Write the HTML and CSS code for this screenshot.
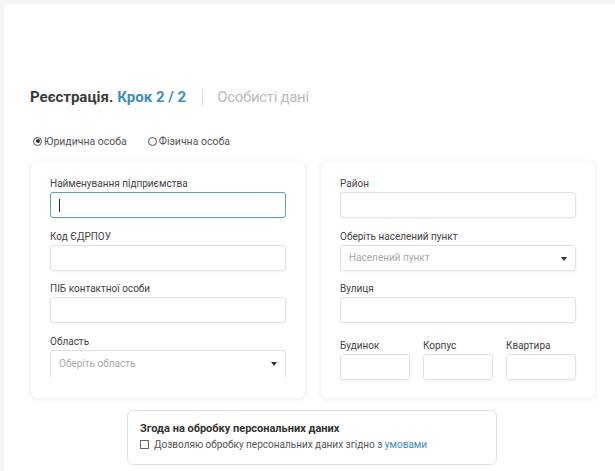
FILE: index.html
```html
<!DOCTYPE html>
<html lang="uk">
    <head>
        <meta charset="UTF-8" />
        <meta name="viewport" content="width=device-width, initial-scale=1.0" />
        <title>Реєстрація</title>
        <link rel="stylesheet" href="styles.css">
    </head>

    <body>
        <div class="page">
            <div class="top"></div>

            <h1 class="title"><span>Реєстрація.</span><span class="step">Крок 2 / 2</span><span class="sep"></span><span class="sub">Особисті дані</span></h1>

            <div class="types">
                <label class="radio"><span class="dot on"></span>Юридична особа</label>
                <label class="radio"><span class="dot"></span>Фізична особа</label>
            </div>

            <section class="cards">
                <div class="card">
                    <div class="field">
                        <label>Найменування підприємства</label>
                        <div class="input focus"><span class="caret"></span></div>
                    </div>
                    <div class="field">
                        <label>Код ЄДРПОУ</label>
                        <div class="input"></div>
                    </div>
                    <div class="field">
                        <label>ПІБ контактної особи</label>
                        <div class="input"></div>
                    </div>
                    <div class="field">
                        <label>Область</label>
                        <div class="input select cut">Оберіть область<span class="arrow"></span></div>
                    </div>
                </div>

                <div class="card">
                    <div class="field">
                        <label>Район</label>
                        <div class="input"></div>
                    </div>
                    <div class="field">
                        <label>Оберіть населений пункт</label>
                        <div class="input select">Населений пункт<span class="arrow"></span></div>
                    </div>
                    <div class="field">
                        <label>Вулиця</label>
                        <div class="input"></div>
                    </div>
                    <div class="row">
                        <div class="field">
                            <label>Будинок</label>
                            <div class="input"></div>
                        </div>
                        <div class="field">
                            <label>Корпус</label>
                            <div class="input"></div>
                        </div>
                        <div class="field">
                            <label>Квартира</label>
                            <div class="input"></div>
                        </div>
                    </div>
                </div>
            </section>

            <div class="consent">
                <h2>Згода на обробку персональних даних</h2>
                <label class="check"><span class="box"></span>Дозволяю обробку персональних даних згідно з&nbsp;<a href="#">умовами</a></label>
            </div>
        </div>
    </body>
</html>
```

FILE: styles.css
```css
* {
    margin: 0;
    padding: 0;
    box-sizing: border-box;
}

html {
    font-family: Roboto, "Open Sans", Arial, sans-serif;
}

body {
    background: #f4f5f9;
    color: #444;
    overflow: hidden;
}

.page {
    margin: 4px 0 0 4px;
    background: #fff;
    border-radius: 6px 0 0 0;
    height: 480px;
    padding-left: 26px;
}

.top {
    height: 80px;
}

.title {
    display: flex;
    align-items: center;
    font-size: 15px;
    font-weight: 700;
    color: #3b3b3b;
    height: 26px;
}

.step {
    color: #3e8ebf;
    margin-left: 4px;
}

.sep {
    width: 1px;
    height: 17px;
    background: #ddd;
    margin: 0 14px 0 16px;
}

.sub {
    font-weight: 400;
    color: #bbb;
    letter-spacing: -0.3px;
}

.types {
    display: flex;
    gap: 21px;
    height: 12px;
    margin: 25px 0 0 3px;
    font-size: 10.5px;
    color: #555;
}

.radio {
    display: flex;
    align-items: center;
}

.dot {
    width: 9px;
    height: 9px;
    border: 1px solid #555;
    border-radius: 50%;
    margin-right: 2px;
    display: flex;
    align-items: center;
    justify-content: center;
}

.dot.on::after {
    content: "";
    width: 4px;
    height: 4px;
    border-radius: 50%;
    background: #333;
}

.cards {
    display: flex;
    gap: 16px;
    margin: 14px 0 0 1px;
}

.card {
    width: 274px;
    height: 237px;
    padding: 14px 19px 0;
    border-radius: 7px;
    background: #fff;
    box-shadow: 0 1px 6px rgba(40, 50, 80, 0.1);
    overflow: hidden;
}

.field label {
    display: block;
    font-size: 10px;
    color: #444;
    height: 17px;
    line-height: 17px;
}

.field {
    margin-bottom: 9.5px;
}

.input {
    height: 26px;
    border: 1px solid #e2e2e2;
    border-radius: 3px;
    box-shadow: 0 1px 2px rgba(0, 0, 0, 0.05);
    display: flex;
    align-items: center;
    padding-left: 8px;
}

.input.focus {
    border-color: #5f9fb3;
}

.caret {
    width: 1px;
    height: 13px;
    background: #222;
}

.select {
    font-size: 10px;
    color: #aaa;
    position: relative;
}

.arrow {
    position: absolute;
    right: 8px;
    top: 11px;
    border-left: 3px solid transparent;
    border-right: 3px solid transparent;
    border-top: 4px solid #333;
}

.cut {
    height: 28px;
    border-bottom-color: transparent;
    box-shadow: none;
    border-radius: 3px 3px 0 0;
}

.row {
    display: flex;
    gap: 13px;
}

.row .field {
    width: 70px;
}

.row .field label {
    height: 21px;
    line-height: 25px;
}

.consent {
    width: 370px;
    margin: 12px 0 0 97px;
    border: 1px solid #e0e0e0;
    border-radius: 6px;
    padding: 11px 12px 12px;
    height: 55px;
}

.consent h2 {
    font-size: 11px;
    font-weight: 700;
    color: #333;
}

.check {
    display: flex;
    align-items: center;
    font-size: 10px;
    color: #555;
    margin-top: 4px;
}

.box {
    width: 9px;
    height: 9px;
    border: 1px solid #666;
    margin-right: 5px;
}

.check a {
    color: #3e8ebf;
    text-decoration: none;
}
```
